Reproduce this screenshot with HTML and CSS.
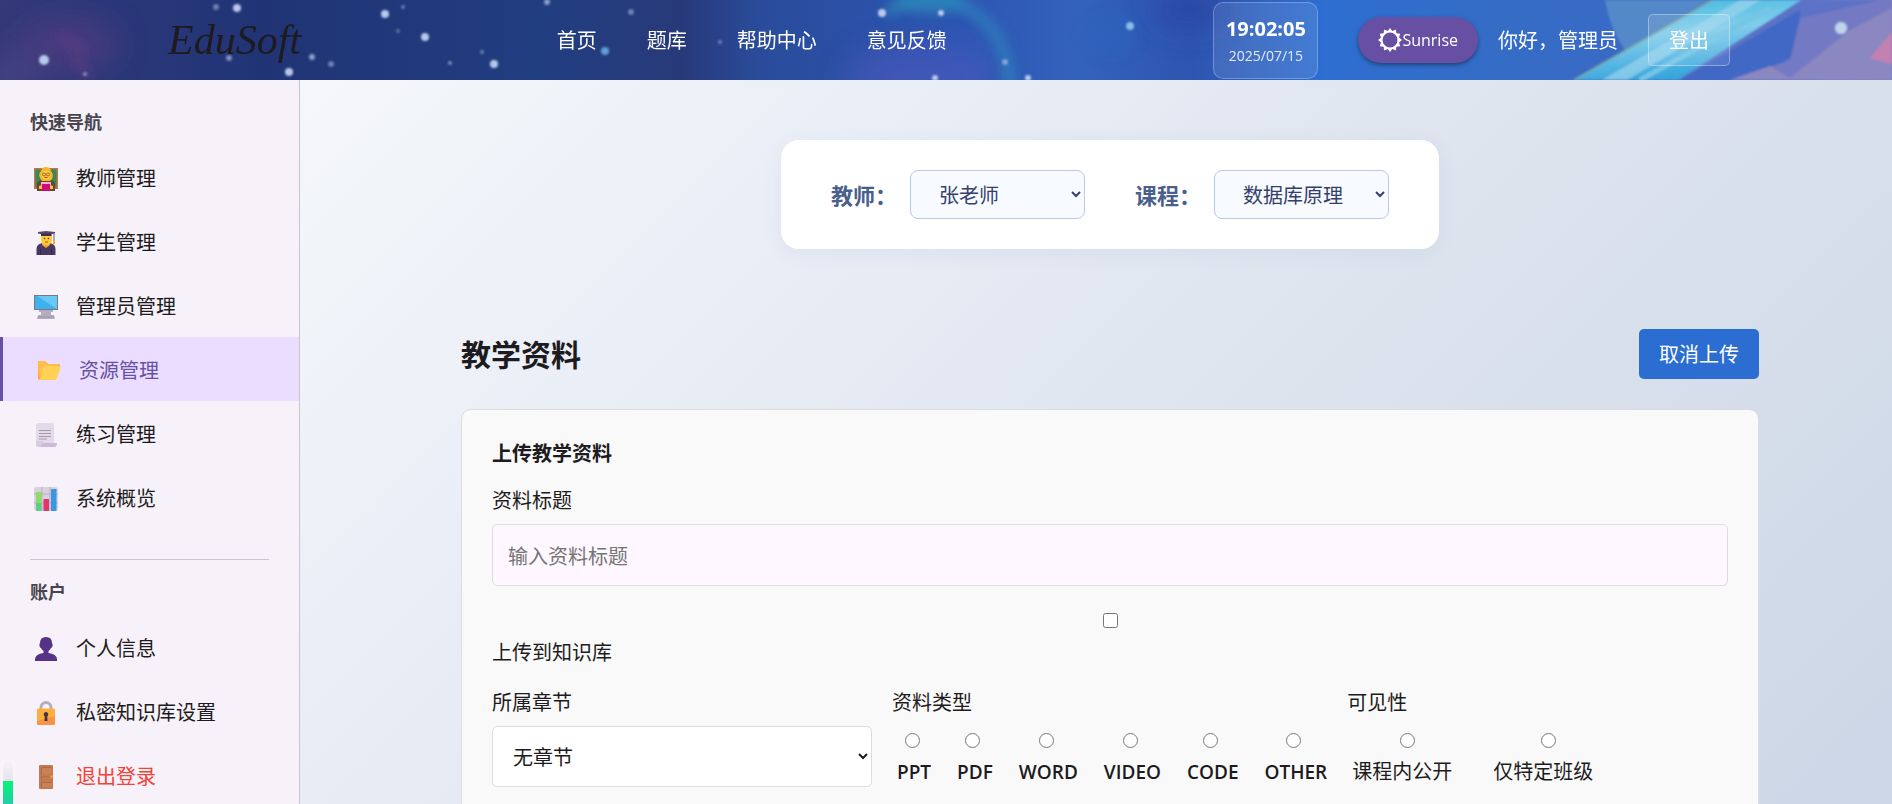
FILE: index.html
```html
<!DOCTYPE html>
<html lang="zh-CN">
<head>
<meta charset="utf-8">
<meta name="viewport" content="width=device-width, initial-scale=1">
<title>EduSoft - 资源管理</title>
<link rel="stylesheet" href="styles.css">
</head>
<body>
<header class="topbar">
  <svg class="sky" viewBox="0 0 1892 80" preserveAspectRatio="none" aria-hidden="true">
    <defs>
      <linearGradient id="skyBase" x1="0" x2="1" y1="0" y2="0">
        <stop offset="0" stop-color="#35397a"/><stop offset=".05" stop-color="#2c387a"/>
        <stop offset=".14" stop-color="#203475"/><stop offset=".29" stop-color="#213e80"/>
        <stop offset=".36" stop-color="#283979"/><stop offset=".4" stop-color="#2a4b9a"/>
        <stop offset=".5" stop-color="#2d55b2"/><stop offset=".57" stop-color="#3362bd"/>
        <stop offset=".63" stop-color="#2e55b0"/><stop offset=".7" stop-color="#2d6ed0"/>
        <stop offset=".8" stop-color="#356cc5"/><stop offset=".9" stop-color="#3d69c6"/>
        <stop offset="1" stop-color="#7d80c4"/>
      </linearGradient>
      <linearGradient id="ray" x1="0" y1="0" x2=".3" y2="1">
        <stop offset="0" stop-color="#35b7df"/><stop offset=".5" stop-color="#82cdea"/><stop offset="1" stop-color="#37a5dc"/>
      </linearGradient>
      <filter id="b1" x="-50%" y="-50%" width="200%" height="200%"><feGaussianBlur stdDeviation="1"/></filter>
      <filter id="b3" x="-50%" y="-50%" width="200%" height="200%"><feGaussianBlur stdDeviation="6"/></filter>
      <filter id="b9" x="-50%" y="-50%" width="200%" height="200%"><feGaussianBlur stdDeviation="14"/></filter>
    </defs>
    <rect width="1892" height="80" fill="url(#skyBase)"/>
    <g filter="url(#b9)">
      <ellipse cx="70" cy="45" rx="50" ry="28" fill="#5b3c83" opacity=".5"/>
      <ellipse cx="10" cy="75" rx="30" ry="20" fill="#4a4684" opacity=".7"/>
      <ellipse cx="920" cy="78" rx="75" ry="34" fill="#4b58bb" opacity=".6"/>
      <ellipse cx="1190" cy="10" rx="40" ry="20" fill="#2944a0" opacity=".7"/>
    </g>
    <g filter="url(#b3)">
      <path d="M885 14Q930-16 970 10T1010 88" fill="none" stroke="#2b92c0" stroke-width="11" opacity=".6"/>
      <ellipse cx="930" cy="2" rx="36" ry="12" fill="#2b8fbc" opacity=".6"/>
      <ellipse cx="1110" cy="35" rx="28" ry="22" fill="#2864bd" opacity=".5"/>
      <path d="M60 35l25 18M75 60l15 18" stroke="#8c3f8b" stroke-width="5" opacity=".6"/>
    </g>
    <g filter="url(#b1)">
      <path d="M1605 0H1725L1630 58Q1610 30 1605 0Z" fill="#5389c8"/>
      <path d="M1892 0V80H1670L1790 0Z" fill="#5c72c7"/>
      <path d="M1680 80L1800 10V50L1760 80Z" fill="#4068c4"/>
      <path d="M1800 18L1880 0H1892V80H1730L1790 60Z" fill="#7379c2"/>
      <path d="M1730 80l40-14 20 12 60-48 42-22V80Z" fill="#8b87c1"/>
      <path d="M1870 58L1892 32V64Z" fill="#c580b2"/>
      <path d="M1574 80L1713 0H1801L1678 80Z" fill="url(#ray)"/>
      <path d="M1602 80L1740 0H1761L1627 80Z" fill="#9bd4ed" opacity=".7"/>
      <path d="M1640 80L1770 8" stroke="#75c5e6" stroke-width="5"/>
      <path d="M1574 80L1713 0" stroke="#7ba9a8" stroke-width="2"/>
      <circle cx="1841" cy="28" r="6" fill="#c0d4ee"/>
    </g>
    <g fill="#b9c9ea" filter="url(#b1)">
      <circle cx="44" cy="60" r="5"/><circle cx="237" cy="8" r="4"/><circle cx="216" cy="7" r="3" opacity=".5"/>
      <circle cx="385" cy="14" r="4"/><circle cx="425" cy="37" r="4"/><circle cx="494" cy="64" r="4"/>
      <circle cx="289" cy="72" r="4"/><circle cx="312" cy="57" r="3" opacity=".7"/><circle cx="229" cy="58" r="3" opacity=".6"/>
      <circle cx="331" cy="64" r="3" opacity=".5"/><circle cx="547" cy="2" r="3" opacity=".7"/><circle cx="605" cy="51" r="4" fill="#5f9fd3"/>
      <circle cx="631" cy="12" r="3" opacity=".5"/><circle cx="482" cy="52" r="2" opacity=".5"/><circle cx="450" cy="63" r="2" opacity=".6"/>
      <circle cx="403" cy="7" r="2" opacity=".5"/><circle cx="398" cy="31" r="2" opacity=".4"/><circle cx="882" cy="13" r="4"/>
      <circle cx="941" cy="13" r="3"/><circle cx="1130" cy="26" r="4" fill="#88bde6"/><circle cx="1005" cy="62" r="3" opacity=".6"/>
      <circle cx="935" cy="78" r="3"/><circle cx="1028" cy="78" r="3"/><circle cx="720" cy="42" r="2" opacity=".5"/><circle cx="85" cy="74" r="2" opacity=".6"/>
    </g>
  </svg>
  <div class="topbar-inner">
    <a class="logo" href="#">EduSoft</a>
    <nav class="topnav">
      <a href="#">首页</a><a href="#">题库</a><a href="#">帮助中心</a><a href="#">意见反馈</a>
    </nav>
    <div class="tools">
      <div class="clock"><strong>19:02:05</strong><span>2025/07/15</span></div>
      <button class="theme" type="button">
        <svg width="24" height="24" viewBox="0 0 24 24" aria-hidden="true"><path fill="#fff" fill-rule="evenodd" d="M12 0l2.300 3L17.800 1.500l.6 3.800 3.900.5-1.300 3.700L24 12l-3 2.500 1.300 3.700-3.900.5-.6 3.800-3.500-1.500L12 24l-2.300-3-3.500 1.500-.6-3.800-3.900-.5L3 14.500 0 12l3-2.500-1.300-3.700 3.900-.5.6-3.800L9.700 3ZM12 4.500a7.500 7.500 0 1 0 0 15 7.500 7.500 0 0 0 0-15Z"/></svg><span>Sunrise</span>
      </button>
      <span class="hello">你好，管理员</span>
      <button class="logout" type="button">登出</button>
    </div>
  </div>
</header>

<div class="layout">
  <aside class="sidebar">
    <h2 class="side-title">快速导航</h2>
    <nav class="side-nav">
      <a href="#"><svg class="icon" viewBox="0 0 24 24"><path fill="#b97850" d="M0 1h24v21H0z"/><path fill="#388954" d="M1.500 2.500h21v18h-21z"/><path fill="#6d4039" d="M3 24v-6q0-5 6-5h6q6 0 6 5v6z"/><path fill="#f8b62c" d="M6 11Q4 7 7 4 8 0 12 0t5 4q3 3 1 8l-2 2H8z"/><circle cx="12" cy="8" r="4.500" fill="#ffcd3c"/><g fill="none" stroke="#8a5030" stroke-width=".8"><circle cx="10" cy="7.500" r="1.500"/><circle cx="14" cy="7.500" r="1.500"/></g><path stroke="#c0392b" d="M10.500 10.500h3"/><path fill="#dfb8d5" d="M7 15h10v3H7z"/><path fill="#d20b79" d="M8 17h8v7H8z"/><path fill="#ffc530" d="M5 19l3-1v4H5zM19 19l-3-1v4h3z"/></svg><span>教师管理</span></a>
      <a href="#"><svg class="icon" viewBox="0 0 24 24"><path fill="#493862" d="M2.500 24v-6q0-5 6-6h7q6 1 6 6v6z"/><path fill="#37264d" d="M6 18h1v6H6zm11 0h1v6h-1z"/><path fill="#f5a623" d="M8 11h8v3l-4 3-4-3z"/><path fill="#ffc93a" d="M7 4h11v5q-1 5-5.500 5T7 9z"/><path fill="#58456e" d="M4 1l8-1 9 1v1.500L12 4 4 2.500z"/><path fill="#3e2e55" d="M7 2.500h10.500V5H7z"/><path stroke="#6f607d" d="M20 2v8"/><path fill="#f4ac31" d="M19 9h2v4h-2z"/><g fill="#52362d"><circle cx="10.500" cy="7.500" r=".8"/><circle cx="14.500" cy="7.500" r=".8"/></g><path stroke="#b45328" d="M11 11h3"/></svg><span>学生管理</span></a>
      <a href="#"><svg class="icon" viewBox="0 0 24 24"><path fill="#7c7385" d="M0 0h24v15H0z"/><path fill="#3eb2ec" d="M1 1h22v13H1z"/><path fill="#69c9f6" d="M3 1h20v13z"/><path fill="#b5adbd" d="M5 15h14v2H5zm2 2h10v3H7zm-3 3h16l1 4H3z"/><path stroke="#8f8498" stroke-width=".6" d="M4 22h16"/></svg><span>管理员管理</span></a>
      <a class="active" href="#" aria-current="page"><svg class="icon" viewBox="0 0 24 24"><path fill="#f6a52b" d="M1 2h7l3 3h10q2 0 2 2v3L18 21H3q-2 0-2-2z"/><path fill="#ffbd4e" d="M1 2h7l3 3h10v3H7L2 20z"/><path fill="#ffd155" d="M8 7h14q2 0 1 3l-3 9q-1 2-3 2H4q-2 0-1-2l3-10q.5-2 2-2z"/></svg><span>资源管理</span></a>
      <a href="#"><svg class="icon" viewBox="0 0 24 24"><path fill="#e2dae9" d="M2 2q0-2 2-2h14q2 0 2 2v19H2z"/><path fill="#d6cce2" d="M2 18h7v6H4q-2 0-2-2z"/><path fill="#cbb9dc" d="M8 20h15q0 4-3 4H6q2-1 2-4z"/><path stroke="#a59bac" d="M5 7.500h12M5 10.500h12M5 13.500h12M5 16h8"/></svg><span>练习管理</span></a>
      <a href="#"><svg class="icon" viewBox="0 0 24 24"><rect width="24" height="24" rx="3" fill="#d8d1df"/><path fill="none" stroke="#b9afc5" d="M0 7h24M0 16h24M8 0v24M16 0v24"/><path fill="#8bdc63" d="M2 6q0-1 1-1h4.500v19H2z"/><path fill="#5dcb8c" d="M2 16h5.500v8H2z"/><path fill="#e4336d" d="M9.500 12h5.500v12H9.500z"/><path fill="#3896e3" d="M17 3q0-1 1-1h4.500v22H17z"/></svg><span>系统概览</span></a>
    </nav>
    <hr class="rule">
    <h2 class="side-title">账户</h2>
    <nav class="side-nav">
      <a href="#"><svg class="icon" viewBox="0 0 24 24"><path fill="#563387" d="M12 0q6 0 6 6 1 1 .5 3T17 11q-1 2-2.500 3v2q8 1 8.500 6v2H1v-2q.500-5 8.500-6v-2Q8 13 7 11 6 11 5.500 9T6 6q0-6 6-6z"/></svg><span>个人信息</span></a>
      <a href="#"><svg class="icon" viewBox="0 0 24 24"><path fill="none" stroke="#b7abc0" stroke-width="3" d="M7 10V6.500a5 5 0 0 1 10 0V10"/><rect x="3" y="7.500" width="18" height="16.500" rx="1.500" fill="#fbb03b"/><path fill="#f5894b" d="M3 20l18-5v7.500q0 1.500-1.500 1.500h-15Q3 24 3 22.500z" opacity=".7"/><path fill="#4a3044" d="M12 11a2.500 2.500 0 0 1 1.300 4.500L13.500 20h-3l.2-4.500A2.500 2.500 0 0 1 12 11z"/></svg><span>私密知识库设置</span></a>
      <a class="danger" href="#"><svg class="icon" viewBox="0 0 24 24"><rect x="5" width="14" height="24" rx="1" fill="#c47a51"/><path fill="#ae6949" d="M7 2h10v7H7zm0 9.500h10v3H7zM7 17h10v5H7z"/><path fill="#c98158" d="M8 3h9v6H8zm0 9.500h9v2H8zM8 18h9v4H8z"/><circle cx="17.500" cy="11.500" r="1.300" fill="#f3a52c"/></svg><span>退出登录</span></a>
    </nav>
    <div class="meter" aria-hidden="true"><div class="meter-fill"></div></div>
  </aside>

  <main class="main">
    <section class="filters">
      <div class="filter"><label for="teacher">教师：</label><select id="teacher"><option>张老师</option></select></div>
      <div class="filter"><label for="course">课程：</label><select id="course"><option>数据库原理</option></select></div>
    </section>

    <section class="materials">
      <div class="section-head">
        <h1>教学资料</h1>
        <button class="primary" type="button">取消上传</button>
      </div>
      <form class="card">
        <h2>上传教学资料</h2>
        <label class="caption" for="title">资料标题</label>
        <input class="text" id="title" type="text" placeholder="输入资料标题">
        <input class="check" id="kb" type="checkbox">
        <label class="kb-label" for="kb">上传到知识库</label>
        <div class="row">
          <div class="chapter">
            <label class="caption" for="chapter">所属章节</label>
            <select id="chapter"><option>无章节</option></select>
          </div>
          <fieldset>
            <legend class="caption">资料类型</legend>
            <div class="radios types">
              <label><input type="radio" name="type">PPT</label>
              <label><input type="radio" name="type">PDF</label>
              <label><input type="radio" name="type">WORD</label>
              <label><input type="radio" name="type">VIDEO</label>
              <label><input type="radio" name="type">CODE</label>
              <label><input type="radio" name="type">OTHER</label>
            </div>
          </fieldset>
          <fieldset>
            <legend class="caption">可见性</legend>
            <div class="radios scope">
              <label><input type="radio" name="scope">课程内公开</label>
              <label><input type="radio" name="scope">仅特定班级</label>
            </div>
          </fieldset>
        </div>
      </form>
    </section>
  </main>
</div>
</body>
</html>
```
FILE: styles.css
```css
* {
  box-sizing: border-box;
}

body {
  margin: 0;
  height: 100vh;
  overflow: hidden;
  display: flex;
  flex-direction: column;
  font-family: "Open Sans", "Noto Sans CJK SC", sans-serif;
  font-size: 20px;
  line-height: 30px;
  color: #1d1b20;
}

h1, h2 {
  margin: 0;
}

a {
  color: inherit;
  text-decoration: none;
}

button, input, select {
  font: inherit;
  color: inherit;
}

/* Top bar */
.topbar {
  position: relative;
  flex: none;
  height: 80px;
  overflow: hidden;
  color: #fff;
}

.sky {
  position: absolute;
  inset: 0;
  width: 100%;
  height: 100%;
}

.topbar-inner {
  position: relative;
  display: flex;
  justify-content: space-between;
  align-items: center;
  height: 100%;
  max-width: 1568px;
  margin: 0 auto;
  padding-left: 6px;
}

.logo {
  width: 138px;
  font-family: "Liberation Serif", serif;
  font-style: italic;
  font-size: 42px;
  line-height: 60px;
  color: #1d1b20;
}

.topnav {
  display: flex;
  gap: 50px;
  margin-right: 16px;
  padding-top: 2px;
}

.tools {
  display: flex;
  align-items: center;
}

.clock {
  display: flex;
  flex-direction: column;
  align-items: center;
  justify-content: center;
  width: 105px;
  height: 77px;
  margin-right: 40px;
  padding-top: 2px;
  border: 1px solid rgba(255, 255, 255, .25);
  border-radius: 10px;
  background: rgba(255, 255, 255, .1);
}

.clock strong {
  font-size: 20px;
  line-height: 30px;
  font-weight: 700;
}

.clock span {
  font-size: 14px;
  line-height: 24px;
  opacity: .85;
}

.theme {
  display: flex;
  align-items: center;
  height: 46px;
  margin-right: 20px;
  padding: 0 20px;
  border: 0;
  border-radius: 23px;
  background: #6750a4;
  box-shadow: 0 2px 4px rgba(0, 0, 0, .4);
  font-size: 16px;
}

.hello {
  margin-right: 30px;
  padding-top: 2px;
}

.logout {
  height: 52px;
  padding: 2px 20px 0;
  border: 1px solid rgba(255, 255, 255, .35);
  border-radius: 5px;
  background: rgba(255, 255, 255, .1);
}

/* Layout */
.layout {
  flex: 1;
  display: flex;
  min-height: 0;
}

.sidebar {
  position: relative;
  flex: 0 0 300px;
  padding-top: 20px;
  overflow: hidden;
  background: #f7f2fa;
  border-right: 1px solid #cac4d0;
}

.side-title {
  padding: 6px 30px 7px;
  font-size: 18px;
  line-height: 32px;
  font-weight: 700;
  color: #49454f;
}

.side-nav {
  display: flex;
  flex-direction: column;
}

.side-nav a {
  display: flex;
  align-items: center;
  gap: 18px;
  height: 64px;
  padding: 3px 0 0 34px;
}

.side-nav .active {
  border-left: 3px solid #6750a4;
  background: #eaddff;
  color: #6750a4;
}

.side-nav .danger {
  color: #f44336;
}

.icon {
  flex: none;
  width: 24px;
  height: 24px;
}

.rule {
  height: 1px;
  margin: 30px 30px 10px;
  border: 0;
  background: #cac4d0;
}

.meter {
  position: absolute;
  left: 3px;
  bottom: 0;
  width: 10px;
  height: 43px;
  padding-top: 20px;
  border-radius: 5px 5px 0 0;
  background: linear-gradient(#f4f1f7, #e6e5e9 20px);
  box-shadow: 0 0 4px rgba(255, 255, 255, .9);
}

.meter-fill {
  height: 100%;
  background: linear-gradient(#08f27a, #22cfa6);
}

.main {
  flex: 1;
  min-width: 0;
  display: flex;
  flex-direction: column;
  align-items: center;
  padding: 60px 20px 0 48px;
  background: linear-gradient(135deg, #f5f7fa 0%, #e9edf6 28%, #dde4ee 55%, #ccd6e6 100%);
}

.filters {
  display: flex;
  gap: 50px;
  padding: 30px 50px;
  border-radius: 18px;
  background: #fff;
  box-shadow: 0 4px 20px rgba(80, 110, 180, .08);
}

.filter {
  display: flex;
  align-items: center;
  gap: 13px;
  font-size: 22px;
  font-weight: 700;
  color: #4a5f8c;
}

.filter select {
  width: 175px;
  height: 49px;
  padding: 2px 3px 0 24px;
  border: 1px solid #bcc8e8;
  border-radius: 8px;
  background: #f7faff;
  font-size: 20px;
  font-weight: 400;
  color: #34406a;
}

.materials {
  width: 100%;
  max-width: 1298px;
  margin-top: 80px;
}

.section-head {
  display: flex;
  justify-content: space-between;
  align-items: center;
  margin-bottom: 30px;
}

.section-head h1 {
  padding-top: 2px;
  font-size: 30px;
  line-height: 48px;
}

.primary {
  height: 50px;
  padding: 2px 20px 0;
  border: 0;
  border-radius: 5px;
  background: #2c6dd2;
  color: #fff;
}

.card {
  display: flex;
  flex-direction: column;
  height: 600px;
  padding: 29px 30px;
  border: 1px solid #ddd;
  border-radius: 10px;
  background: #f9f9f9;
}

.card h2 {
  margin-bottom: 17px;
  font-size: 20px;
  line-height: 30px;
}

.caption {
  display: block;
  margin-bottom: 8px;
  padding: 0;
}

.text {
  width: 100%;
  height: 62px;
  padding: 2px 15px 0;
  border: 1px solid #ddd;
  border-radius: 5px;
  background: #fef7ff;
}

.text::placeholder {
  color: #757575;
}

.check,
.radios input {
  width: 15px;
  height: 15px;
  margin: 0;
}

.check {
  align-self: center;
  margin-top: 27px;
}

.kb-label {
  margin: 10px 0 20px;
}

.row {
  display: flex;
  gap: 20px;
}

.chapter {
  flex: 0 1 380px;
}

.chapter select {
  width: 100%;
  height: 61px;
  padding: 2px 3px 0 16px;
  border: 1px solid #ddd;
  border-radius: 5px;
  background: #fff;
}

fieldset {
  min-width: 0;
  margin: 0;
  padding: 0;
  border: 0;
}

.radios {
  display: flex;
  padding: 7px 0 0 5px;
}

.radios label {
  display: flex;
  flex-direction: column;
  align-items: center;
  gap: 9px;
}

.types {
  gap: 26px;
  font-size: 19px;
  font-weight: 600;
}

.types input {
  margin-right: 4px;
}

.scope {
  gap: 41px;
}

.scope input {
  margin-left: 10px;
}
```
